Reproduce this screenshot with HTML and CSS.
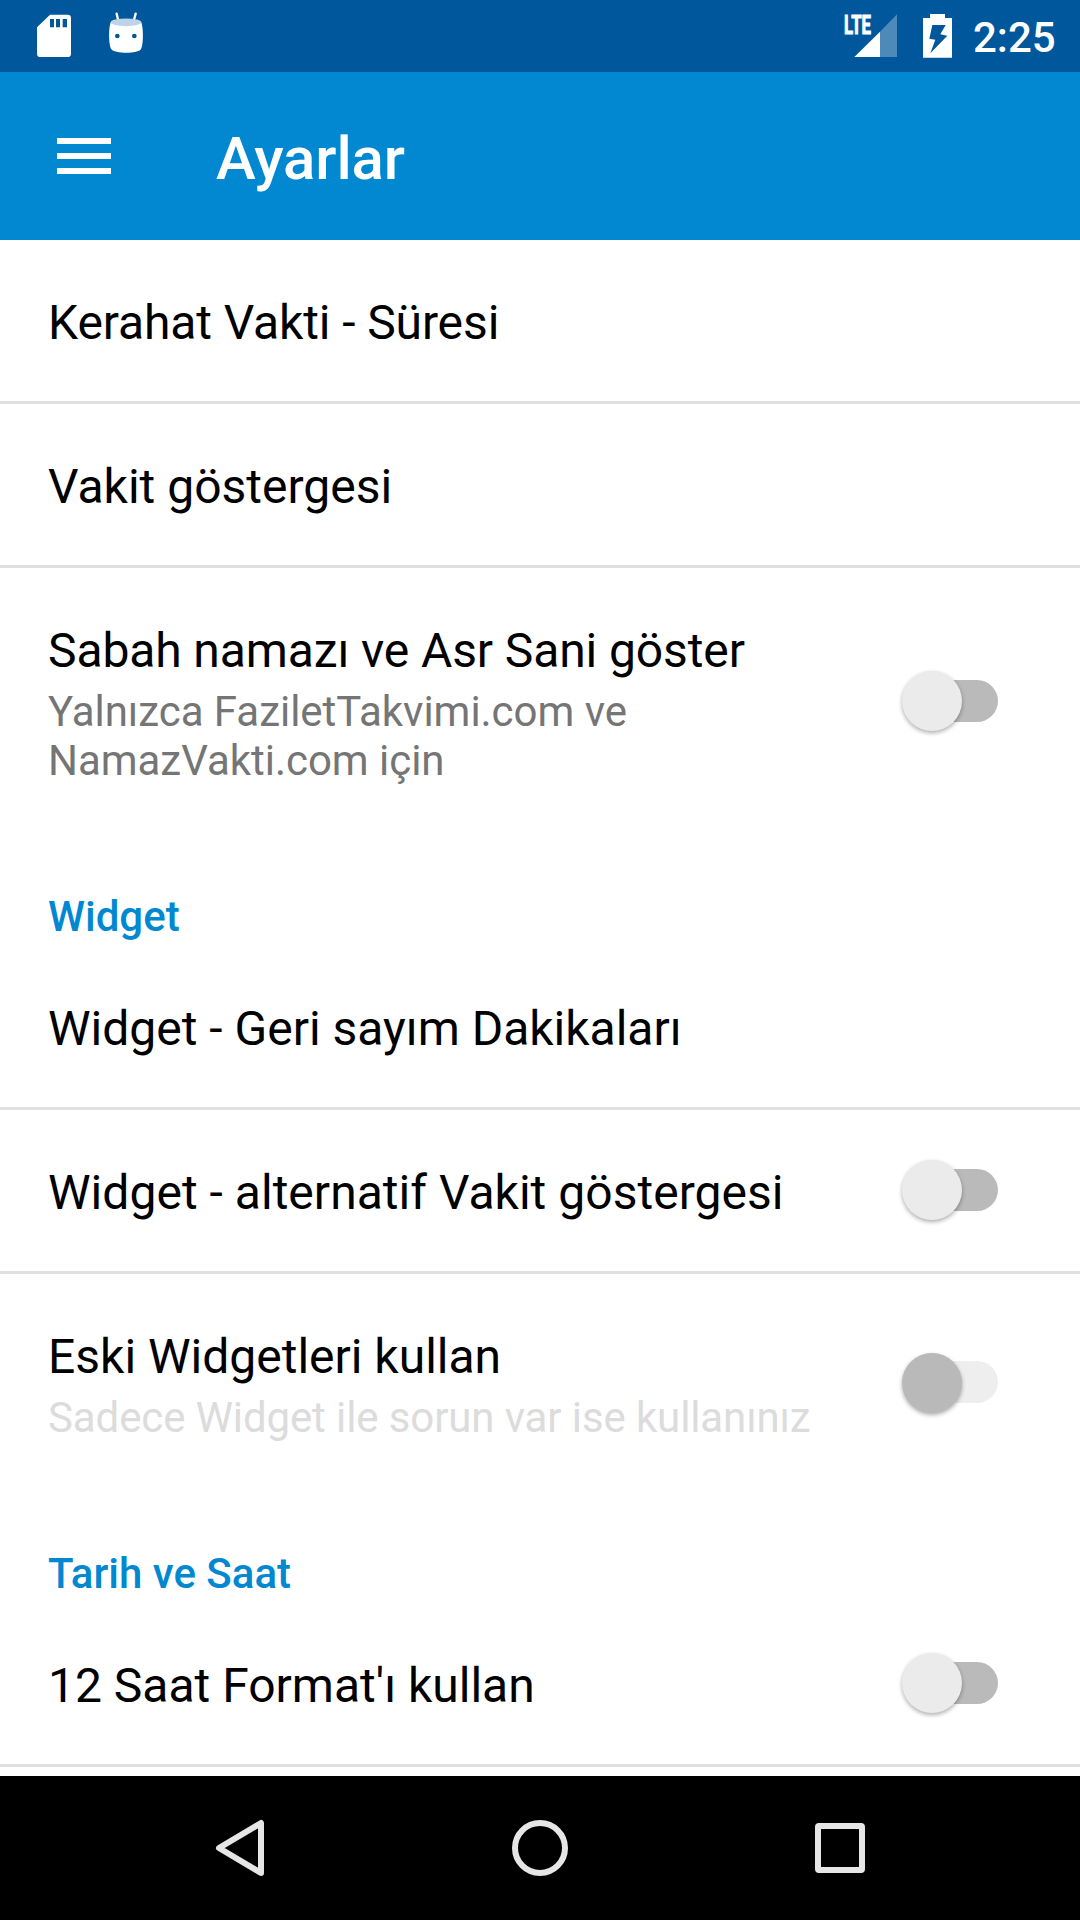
FILE: index.html
```html
<!DOCTYPE html>
<html lang="tr">
<head>
<meta charset="utf-8">
<title>Ayarlar</title>
<link rel="stylesheet" href="styles.css">
</head>
<body>
<div class="screen">
  <header class="status">
    <svg class="sd" viewBox="108 0 108 216"><path fill="#fff" fill-rule="evenodd" d="M150 44H203Q213 44 213 54V161Q213 171 203 171H121Q111 171 111 161V82ZM150 57V82H162V57ZM168 57V82H180V57ZM188 57V82H201V57Z"/></svg>
    <svg class="droid" viewBox="324 0 108 216">
      <path stroke="#fff" stroke-width="7" stroke-linecap="round" d="M350 41L355 63M407 41L401 63"/>
      <path fill="#fff" d="M333 65C325 80 326 135 334 147C342 162 416 162 423 147C431 135 431 80 423 65Z"/>
      <ellipse cx="378" cy="67" rx="46" ry="11.500" fill="#bdd3e7"/>
      <circle cx="352" cy="108" r="7" fill="#01579b"/><circle cx="403" cy="108" r="7" fill="#01579b"/>
    </svg>
    <svg class="signal" viewBox="69 0 168 216">
      <text class="lte" x="75" y="101" textLength="81" lengthAdjust="spacingAndGlyphs">LTE</text>
      <path fill="#fff" d="M106 171L183 95V171Z"/><path fill="#fff" fill-opacity=".3" d="M183 95L234 43V171H183Z"/>
    </svg>
    <svg class="battery" viewBox="306 0 93 216"><path fill="#fff" fill-rule="evenodd" d="M330 42H375V54H396V173H309V54H330ZM337 75L328 116L346 119L331 160L382 107L361 103L377 75Z"/></svg>
    <span class="clock">2:25</span>
  </header>
  <div class="toolbar">
    <div class="menu"><i></i><i></i><i></i></div>
    <h1 class="heading">Ayarlar</h1>
  </div>
  <main class="list">
    <div class="row line"><div class="label"><div class="title snug">Kerahat Vakti - Süresi</div></div></div>
    <div class="row line"><div class="label"><div class="title">Vakit göstergesi</div></div></div>
    <div class="row tall"><div class="label"><div class="title snug">Sabah namazı ve Asr Sani göster</div><div class="summary">Yalnızca FaziletTakvimi.com ve<br>NamazVakti.com için</div></div><div class="switch"><span class="thumb"></span></div></div>
    <h2 class="category">Widget</h2>
    <div class="row line"><div class="label"><div class="title">Widget - Geri sayım Dakikaları</div></div></div>
    <div class="row line"><div class="label"><div class="title loose">Widget - alternatif Vakit göstergesi</div></div><div class="switch"><span class="thumb"></span></div></div>
    <div class="row medium disabled"><div class="label"><div class="title">Eski Widgetleri kullan</div><div class="summary snug">Sadece Widget ile sorun var ise kullanınız</div></div><div class="switch"><span class="thumb"></span></div></div>
    <h2 class="category">Tarih ve Saat</h2>
    <div class="row line"><div class="label"><div class="title">12 Saat Format'ı kullan</div></div><div class="switch"><span class="thumb"></span></div></div>
  </main>
  <nav class="navbar">
    <svg viewBox="0 0 72 72"><path d="M15 36L57 11V61Z"/></svg>
    <svg viewBox="0 0 72 72"><circle cx="36" cy="36" r="25"/></svg>
    <svg viewBox="0 0 72 72"><rect x="14" y="14" width="44" height="44" rx="1"/></svg>
  </nav>
</div>
</body>
</html>
```
FILE: styles.css
```css
* { box-sizing: border-box; }
body { margin: 0; background: #fff; font-family: Roboto, sans-serif; color: #000; }
.screen { width: 1080px; height: 1920px; display: flex; flex-direction: column; overflow: hidden; }

.status { height: 72px; flex: none; display: flex; background: #01579b; padding: 0 23px 0 36px; }
.status svg { height: 72px; flex: none; display: block; }
.sd, .droid { width: 36px; }
.droid { margin-left: 36px; }
.signal { width: 56px; margin-left: auto; }
.battery { width: 31px; margin-left: 24px; }
.lte { font: 700 76px Roboto, sans-serif; fill: #fff; stroke: #fff; stroke-width: 3px; }
.clock { width: 84px; margin-left: 20px; color: #fff; font-size: 42px; font-weight: 500; line-height: 75px; white-space: nowrap; }

.toolbar { height: 168px; flex: none; display: flex; align-items: center; background: #0288d1; padding-left: 57px; }
.menu { width: 54px; display: grid; gap: 9px; }
.menu i { height: 6px; background: #fff; }
.heading { margin: 5px 0 0 105px; font-size: 60px; font-weight: 500; line-height: 70px; color: #fff; letter-spacing: -.1px; }

.list { flex: 1; min-height: 0; overflow: hidden; }
.row { display: flex; align-items: center; justify-content: space-between; padding: 0 82px 0 48px; }
.row .label { align-self: flex-start; padding-top: 54px; white-space: nowrap; }
.line { height: 164px; border-bottom: 3px solid #e0e0e0; }
.tall { height: 265px; }
.medium { height: 216px; }
.title { font-size: 48px; line-height: 57px; }
.summary { margin-top: 8px; font-size: 42px; line-height: 49px; color: #757575; letter-spacing: -.03px; }
.snug { letter-spacing: -.11px; }
.loose { letter-spacing: .03px; }
.disabled .summary { color: #dcdcdc; }
.category { height: 113px; margin: 0; padding: 59px 0 0 48px; font-size: 42px; font-weight: 500; line-height: 49px; color: #0288d1; }

.switch { width: 96px; height: 42px; flex: none; display: flex; align-items: center; border-radius: 21px; background: linear-gradient(90deg, transparent 30px, #bababa 30px); }
.line .switch { margin-bottom: 1px; }
.tall .switch { margin-top: 1px; }
.thumb { width: 60px; height: 60px; flex: none; margin-left: .4px; border-radius: 50%; background: #ebebeb; box-shadow: 0 2px 4px rgba(0, 0, 0, .32); }
.disabled .switch { background: linear-gradient(90deg, transparent 30px, #eee 30px); }
.disabled .thumb { margin-top: 1px; background: #b9b9b9; }

.navbar { height: 144px; flex: none; display: flex; justify-content: center; gap: 228px; align-items: center; background: #000; }
.navbar svg { width: 72px; height: 72px; fill: none; stroke: #e6e6e6; stroke-width: 6px; stroke-linejoin: round; }
```
